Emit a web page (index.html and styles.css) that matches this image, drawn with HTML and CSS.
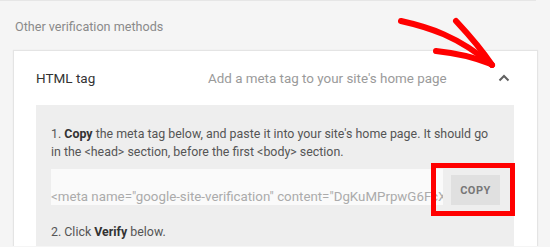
FILE: index.html
```html
<!DOCTYPE html>
<html lang="en">

<head>
    <meta charset="UTF-8">
    <meta name="viewport" content="width=device-width, initial-scale=1.0">
    <title>Other verification methods</title>
    <link rel="stylesheet" href="styles.css">
</head>

<body>
    <div class="page">
        <div class="prev-card"></div>

        <h2 class="section-title">Other verification methods</h2>

        <div class="card">
            <div class="card-header">
                <span class="method-name">HTML tag</span>
                <span class="method-desc">Add a meta tag to your site's home page</span>
                <svg class="chevron" width="12" height="8" viewBox="0 0 12 8">
                    <path d="M1.5 6.5 L6 2 L10.5 6.5" fill="none" stroke="#616161" stroke-width="2" />
                </svg>
            </div>

            <div class="panel">
                <p class="step">1. <b>Copy</b> the meta tag below, and paste it into your site's home page. It should go
                    in the &lt;head&gt; section, before the first &lt;body&gt; section.</p>

                <div class="code-row">
                    <div class="code-field">&lt;meta name="google-site-verification" content="DgKuMPrpwG6FcXq0bT7mYzLQ3nVdR8sHkJw" /&gt;</div>
                    <button class="copy-btn">COPY</button>
                </div>

                <p class="step step-two">2. Click <b>Verify</b> below.</p>
            </div>
        </div>

        <!-- annotation arrow -->
        <svg class="arrow" width="110" height="60" viewBox="0 0 110 60">
            <path d="M3 13 C 30 19, 60 28, 94 57" fill="none" stroke="#f00" stroke-width="6" stroke-linecap="round" />
            <path d="M58 13 C 72 28, 84 42, 94 57" fill="none" stroke="#f00" stroke-width="6" stroke-linecap="round" />
            <path d="M38 43 C 58 45, 78 50, 93 56" fill="none" stroke="#f00" stroke-width="6" stroke-linecap="round" />
        </svg>
    </div>
</body>

</html>
```

FILE: styles.css
```css
* {
    margin: 0;
    padding: 0;
    box-sizing: border-box;
}

body {
    background: #f5f5f5;
    font-family: Roboto, "Liberation Sans", sans-serif;
    overflow: hidden;
}

.page {
    position: relative;
    width: 550px;
    height: 247px;
}

.prev-card {
    width: 536px;
    height: 2px;
    background: #fff;
    border-bottom: 1px solid #e6e6e6;
    margin-top: -1px;
}

.section-title {
    font-size: 12.6px;
    font-weight: 400;
    color: #8a8a8a;
    line-height: 18px;
    padding: 17px 0 0 15px;
}

/* CARD */
.card {
    margin: 15px 0 0 14px;
    width: 523px;
    background: #fff;
    box-shadow: 0 0 1px 1px #e4e4e4;
    padding: 0 23px 0 22px;
}

.card-header {
    display: flex;
    align-items: center;
    height: 54px;
}

.method-name {
    font-size: 13.5px;
    color: #333;
    width: 172px;
}

.method-desc {
    font-size: 13.4px;
    color: #9a9a9a;
    flex: 1;
}

.chevron {
    margin-right: 4px;
}

/* PANEL */
.panel {
    background: #eeeeee;
    padding: 20px 14px 20px 15px;
}

.step {
    font-size: 12.4px;
    line-height: 18px;
    color: #555;
}

.step b {
    color: #333;
    font-weight: 700;
}

.code-row {
    display: flex;
    align-items: flex-end;
    gap: 8px;
    margin-top: 8px;
}

.code-field {
    flex: 1;
    height: 36px;
    background: #fafafa;
    font-size: 13.3px;
    line-height: 18px;
    color: #ababab;
    white-space: nowrap;
    overflow: hidden;
    padding-top: 19px;
}

.copy-btn {
    position: relative;
    width: 49px;
    height: 30px;
    border: none;
    background: #e0e0e0;
    color: #777;
    font-family: Roboto, "Liberation Sans", sans-serif;
    font-size: 11px;
    font-weight: 700;
    letter-spacing: .5px;
}

/* red highlight box around the button */
.copy-btn::after {
    content: "";
    box-sizing: border-box;
    position: absolute;
    left: -20px;
    top: -12px;
    width: 84px;
    height: 53px;
    border: 5px solid #f00;
}

.step-two {
    margin-top: 18px;
}

.arrow {
    position: absolute;
    left: 398px;
    top: 9px;
}
```
